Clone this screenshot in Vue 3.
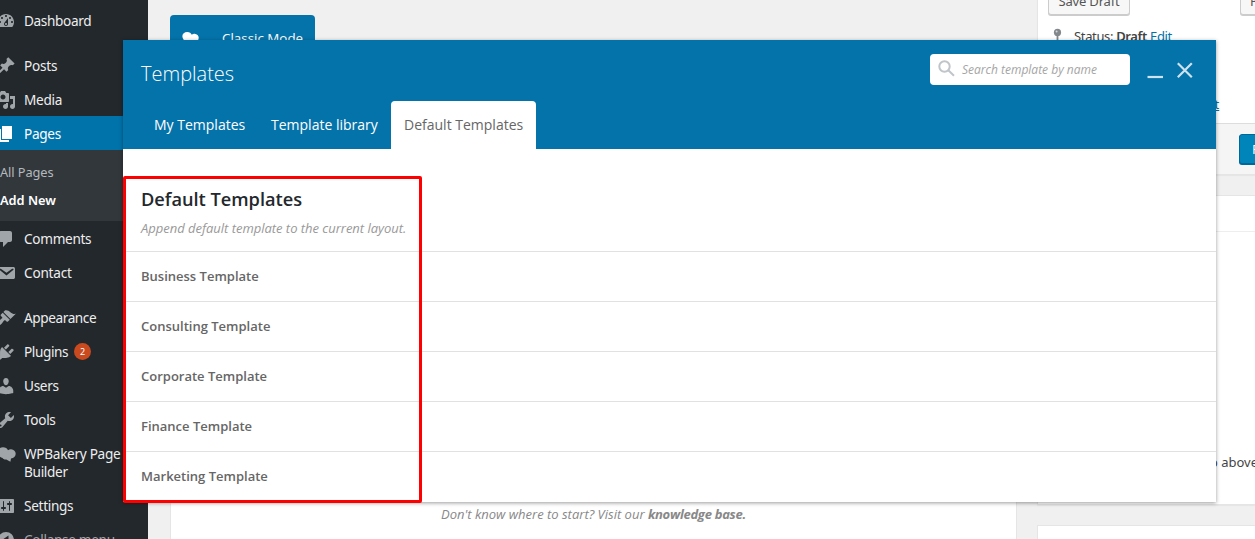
<script setup>
const icons = {
  dashboard: 'M3.76 16h12.48c1.1-1.37 1.76-3.11 1.76-5 0-4.42-3.58-8-8-8s-8 3.58-8 8c0 1.89.66 3.63 1.76 5zM10 4c.55 0 1 .45 1 1s-.45 1-1 1-1-.45-1-1 .45-1 1-1zM6 6c.55 0 1 .45 1 1s-.45 1-1 1-1-.45-1-1 .45-1 1-1zm8 0c.55 0 1 .45 1 1s-.45 1-1 1-1-.45-1-1 .45-1 1-1zm-5.37 5.55L12 7v6c0 1.1-.9 2-2 2s-2-.9-2-2c0-.57.24-1.08.63-1.45zM4 10c.55 0 1 .45 1 1s-.45 1-1 1-1-.45-1-1 .45-1 1-1zm12 0c.55 0 1 .45 1 1s-.45 1-1 1-1-.45-1-1 .45-1 1-1zm-5 3c0-.55-.45-1-1-1s-1 .45-1 1 .45 1 1 1 1-.45 1-1z',
  posts: 'M10.44 3.02l1.82-1.82 6.36 6.35-1.83 1.82c-1.05-.68-2.48-.57-3.41.36l-.75.75c-.92.93-1.04 2.35-.35 3.41l-1.83 1.82-2.41-2.41-2.8 2.79c-.42.42-3.38 2.71-3.8 2.29s1.86-3.39 2.28-3.81l2.79-2.79L4.1 9.36l1.83-1.82c1.05.69 2.48.57 3.4-.36l.75-.75c.93-.92 1.05-2.35.36-3.41z',
  media: 'M13 11V4c0-.55-.45-1-1-1h-1.67L9 1H5L3.67 3H2c-.55 0-1 .45-1 1v7c0 .55.45 1 1 1h10c.55 0 1-.45 1-1zM7 4.5c1.38 0 2.5 1.12 2.5 2.5S8.38 9.5 7 9.5 4.5 8.38 4.5 7 5.62 4.5 7 4.5zM14 6h5v10.5c0 1.38-1.12 2.5-2.5 2.5S14 17.88 14 16.5s1.12-2.5 2.5-2.5c.17 0 .34.02.5.05V9h-3V6zm-4 8.05V13h2v3.5c0 1.38-1.12 2.5-2.5 2.5S7 17.88 7 16.5 8.12 14 9.5 14c.17 0 .34.02.5.05z',
  pages: 'M6 15V2h10v13H6zm-1 1h8v2H3V5h2v11z',
  comments: 'M5 2h9c1.1 0 2 .9 2 2v7c0 1.1-.9 2-2 2h-2l-5 5v-5H5c-1.1 0-2-.9-2-2V4c0-1.1.9-2 2-2z',
  contact: 'M3.87 4h13.25C18.37 4 19 4.59 19 5.79v8.42c0 1.19-.63 1.79-1.88 1.79H3.87c-1.25 0-1.88-.6-1.88-1.79V5.79c0-1.2.63-1.79 1.88-1.79zm6.62 8.6l6.74-5.53c.24-.2.43-.66.13-1.07-.29-.41-.82-.42-1.17-.17l-5.7 3.86L4.8 5.83c-.35-.25-.88-.24-1.17.17-.3.41-.11.87.13 1.07z',
  appearance: 'M14.48 11.06L7.41 3.99l1.5-1.5c.5-.56 2.3-.47 3.51.32 1.21.8 1.43 1.28 2.91 2.1 1.18.64 2.45 1.26 4.45.85zm-.71.71L6.7 4.7 4.93 6.47c-.39.39-.39 1.02 0 1.41l1.06 1.06c.39.39.39 1.03 0 1.42-.6.6-1.43 1.11-2.21 1.69-.35.26-.7.53-1.01.84C1.43 14.23.4 16.08 1.4 17.07c.99 1 2.84-.03 4.18-1.36.31-.31.58-.66.85-1.02.57-.78 1.08-1.61 1.69-2.21.39-.39 1.02-.39 1.41 0l1.06 1.06c.39.39 1.02.39 1.41 0z',
  plugins: 'M13.11 4.36L9.87 7.6 8 5.73l3.24-3.24c.35-.34 1.05-.2 1.56.32.52.51.66 1.21.31 1.55zm-8 1.77l.91-1.12 9.01 9.01-1.19.84c-.71.71-2.63 1.16-3.82 1.16H6.14L4.9 17.26c-.59.59-1.54.59-2.12 0-.59-.58-.59-1.53 0-2.12l1.24-1.24v-3.88c0-1.13.4-3.19 1.09-3.89zm7.26 3.97l3.24-3.24c.34-.35 1.04-.21 1.55.31.52.51.66 1.21.31 1.55l-3.24 3.25z',
  users: 'M10 9.25c-2.27 0-2.73-3.44-2.73-3.44C7 4.02 7.82 2 9.97 2c2.16 0 2.98 2.02 2.71 3.81 0 0-.41 3.44-2.68 3.44zm0 2.57L12.72 10c2.39 0 4.52 2.33 4.52 4.53v2.49s-3.65 1.13-7.24 1.13c-3.65 0-7.24-1.13-7.24-1.13v-2.49c0-2.25 1.94-4.48 4.47-4.48z',
  tools: 'M16.68 9.77c-1.34 1.34-3.3 1.67-4.95.99l-5.41 6.52c-.99.99-2.59.99-3.58 0s-.99-2.59 0-3.57l6.52-5.42c-.68-1.65-.35-3.61.99-4.95 1.28-1.28 3.12-1.62 4.72-1.06l-2.89 2.89 2.82 2.82 2.86-2.87c.53 1.58.18 3.39-1.08 4.65zM3.81 16.21c.4.39 1.04.39 1.43 0 .4-.4.4-1.04 0-1.43-.39-.4-1.03-.4-1.43 0-.39.39-.39 1.03 0 1.43z',
  bakery: 'M1.500 8C1.500 5.200 3.800 3.200 7 3.200c2.400 0 4.300 1.200 5 3.100 1-.8 2-1.100 3.100-1 2.700.2 4.600 2 4.600 4.500 0 2.700-2 4.600-4.700 4.700l-.6 3.300-4.100-2.400c-1.600.3-2.900-.2-3.800-1.400C3.700 13.300 1.500 10.900 1.500 8z',
  settings: 'M18 16V4c0-.55-.45-1-1-1H3c-.55 0-1 .45-1 1v12c0 .55.45 1 1 1h14c.55 0 1-.45 1-1zM8 11h1c.55 0 1 .45 1 1s-.45 1-1 1H8v1.5c0 .28-.22.5-.5.5s-.5-.22-.5-.5V13H6c-.55 0-1-.45-1-1s.45-1 1-1h1V5.500c0-.28.22-.5.5-.5s.5.22.5.5V11zm5-2h-1c-.55 0-1-.45-1-1s.45-1 1-1h1V5.500c0-.28.22-.5.5-.5s.5.22.5.5V7h1c.55 0 1 .45 1 1s-.45 1-1 1h-1v5.500c0 .28-.22.5-.5.5s-.5-.22-.5-.5V9z',
  collapse: 'M10 2a8 8 0 1 1 0 16 8 8 0 0 1 0-16zm2.500 3.500L6 10l6.500 4.500z',
}
const menu = [
  { icon: 'dashboard', label: 'Dashboard' },
  { icon: 'posts', label: 'Posts', gap: true },
  { icon: 'media', label: 'Media' },
  { icon: 'pages', label: 'Pages', active: true, sub: ['All Pages', 'Add New'] },
  { icon: 'comments', label: 'Comments' },
  { icon: 'contact', label: 'Contact' },
  { icon: 'appearance', label: 'Appearance', gap: true },
  { icon: 'plugins', label: 'Plugins', count: 2 },
  { icon: 'users', label: 'Users' },
  { icon: 'tools', label: 'Tools' },
  { icon: 'bakery', label: 'WPBakery Page Builder' },
  { icon: 'settings', label: 'Settings' },
  { icon: 'collapse', label: 'Collapse menu', dim: true },
]
const templates = ['Business', 'Consulting', 'Corporate', 'Finance', 'Marketing']
</script>

<template>
  <div class="screen">
    <nav class="sidebar">
      <template v-for="m in menu" :key="m.icon">
        <div class="item" :class="{ active: m.active, gap: m.gap, dim: m.dim }">
          <svg class="ico" viewBox="0 0 20 20"><path :d="icons[m.icon]" fill-rule="evenodd" /></svg>
          <span class="label" :class="m.icon">{{ m.label }}</span>
          <span v-if="m.count" class="count">{{ m.count }}</span>
        </div>
        <div v-if="m.sub" class="sub">
          <div class="sub-all">{{ m.sub[0] }}</div>
          <div class="sub-new">{{ m.sub[1] }}</div>
        </div>
      </template>
    </nav>

    <main class="editor">
      <div class="classic">
        <svg viewBox="0 0 20 20"><path :d="icons.bakery" /></svg>
        <span>Classic Mode</span>
      </div>
      <div class="canvas">
        <p>Don't know where to start? Visit our <b>knowledge base.</b></p>
      </div>
    </main>

    <aside class="side">
      <section class="box publish">
        <div class="actions"><span class="btn save">Save Draft</span><span class="btn preview">Preview</span></div>
        <div class="status">
          <svg viewBox="0 0 10 16"><circle cx="5" cy="4" r="4" /><path d="M4 7h2v6l-1 2-1-2z" /><circle class="shine" cx="4" cy="3" r="1.100" /></svg>
          <span>Status: <b>Draft</b> <a>Edit</a></span>
        </div>
        <div class="schedule"><a>Edit</a></div>
        <div class="pubfoot"><span class="primary">Publish</span></div>
      </section>
      <section class="box attrs">
        <div class="boxhead"></div>
        <p>Need help? Use the Help tab above</p>
      </section>
      <section class="box last"></section>
    </aside>

    <div class="modal">
      <header>
        <div class="top">
          <h1>Templates</h1>
          <div class="search">
            <svg viewBox="0 0 17 17"><circle cx="6.500" cy="6.500" r="5.200" /><path d="M10.300 10.300l5.700 5.400" /></svg>
            <span>Search template by name</span>
          </div>
          <svg class="win" viewBox="0 0 46 20"><path d="M.5 17h15.500" /><path d="M30.800 3.200l14 14m0-14l-14 14" /></svg>
        </div>
        <div class="tabs">
          <span class="tab my">My Templates</span>
          <span class="tab lib">Template library</span>
          <span class="tab def">Default Templates</span>
        </div>
      </header>
      <div class="intro">
        <h2>Default Templates</h2>
        <p>Append default template to the current layout.</p>
      </div>
      <div v-for="t in templates" :key="t" class="row"><span>{{ t }} Template</span></div>
      <div class="highlight"></div>
    </div>
  </div>
</template>

<style>
body { overflow: hidden; }
</style>

<style scoped>
* { box-sizing: border-box; }
h1, h2, p { margin: 0; font-weight: 400; }
.screen { position: relative; display: flex; width: 1255px; height: 539px; overflow: hidden; background: #f0f0f0; font-family: "Open Sans", "Noto Sans", sans-serif; font-size: 13px; color: #444; white-space: nowrap; }
.sidebar { width: 148px; flex: none; padding-top: 4px; background: #23282d; font-family: "Noto Sans", sans-serif; }
.item { display: flex; align-items: flex-start; min-height: 34px; padding: 8px 0; color: #eee; font-size: 14px; line-height: 18px; }
.item.gap { margin-top: 11px; }
.item.active { margin-top: -1px; background: #0073aa; color: #fff; padding: 9px 0 7px; }
.ico { width: 20px; height: 20px; flex: none; margin: -1px 8px -1px -4px; fill: #a0a5aa; }
.active .ico { fill: #fff; }
.item.dim { color: #a0a5aa; }
.dim .ico { fill: #a0a5aa; }
.label { font-size: 13.600px; letter-spacing: -0.3px; }
.label.dashboard { letter-spacing: -0.35px; }
.label.appearance { letter-spacing: -0.4px; }
.label.plugins { letter-spacing: -0.4px; }
.label.posts, .label.contact { letter-spacing: -0.2px; }
.label.bakery { width: 99px; white-space: normal; }
.count { width: 17px; height: 17px; margin: 0 0 0 6px; border-radius: 9px; background: #ca4a1f; color: #fff; font-size: 9px; line-height: 17px; text-align: center; }
.sub { height: 71px; margin-bottom: 1px; padding-top: 8px; background: #32373c; font-size: 12.800px; letter-spacing: -0.08px; line-height: 28px; color: #b4b9be; }
.sub-new { color: #fff; font-weight: 600; letter-spacing: 0; }

.editor { width: 847px; margin-left: 22px; flex: none; padding-top: 15px; }
.classic { display: flex; align-items: center; width: 145px; height: 46px; padding-left: 11px; border-radius: 4px; background: #0473aa; color: #fff; font-size: 13.400px; }
.classic svg { width: 18px; height: 18px; margin-right: 23px; fill: #fff; }
.canvas { height: 479px; margin-top: 20px; padding: 423px 0 0 270px; border: 1px solid #e5e5e5; background: #fff; }
.canvas p { color: #888; font-style: italic; line-height: 18px; }
.canvas b { font-weight: 700; letter-spacing: -0.28px; }

.side { width: 280px; margin-left: 20px; flex: none; font-family: "Noto Sans", sans-serif; }
.box { border: 1px solid #e5e5e5; background: #fff; }
.publish { height: 175px; border-top: 0; box-shadow: 0 1px 1px rgba(0,0,0,.04); }
.actions { display: flex; height: 15px; align-items: flex-end; padding-left: 10px; }
.btn { height: 28px; flex: none; border: 1px solid #ccc; border-radius: 3px; background: #f7f7f7; box-shadow: 0 1px 0 #ccc; line-height: 26px; text-align: center; color: #555; letter-spacing: -0.2px; }
.save { width: 82px; }
.preview { width: 66px; margin-left: 110px; }
.status { display: flex; margin-top: 12px; padding-left: 15px; line-height: 18px; letter-spacing: -0.35px; }
.status svg { width: 9px; height: 16px; margin: 1px 12px 0 0; fill: #82878c; }
.status .shine { fill: #d5d7d9; }
.status b { font-weight: 600; }
a { color: #0073aa; }
.schedule { margin-top: 50px; padding-left: 158px; line-height: 18px; }
.schedule a { text-decoration: underline; }
.pubfoot { height: 51px; margin-top: 10px; padding: 10px 0 0 201px; border-top: 1px solid #ddd; background: #f5f5f5; }
.primary { display: block; width: 66px; height: 30px; border: 1px solid #006799; border-radius: 3px; background: #0085ba; box-shadow: 0 1px 0 #006799; color: #fff; line-height: 28px; padding-left: 12px; }
.attrs { height: 310px; margin-top: 20px; box-shadow: 0 1px 1px rgba(0,0,0,.04); }
.boxhead { height: 36px; border-bottom: 1px solid #eee; }
.attrs p { width: 220px; margin-top: 221px; text-align: right; line-height: 18px; }
.last { height: 60px; margin-top: 20px; }

.modal { position: absolute; left: 123px; top: 40px; width: 1093px; height: 462px; background: #fff; box-shadow: 0 1px 4px rgba(0,0,0,.4); }
header { height: 109px; background: #0473aa; color: #fff; }
.top { display: flex; height: 61px; align-items: flex-start; padding-left: 18px; }
h1 { width: 789px; padding-top: 20px; font-size: 20px; line-height: 28px; font-weight: 300; }
.search { display: flex; width: 200px; height: 31px; margin-top: 14px; padding-left: 8px; align-items: center; border-radius: 4px; background: #fff; color: #a5a5a5; font-size: 12px; font-style: italic; }
.search svg { width: 17px; height: 17px; margin: -3px 7px 0 0; fill: none; stroke: #c0c5ca; stroke-width: 2; }
.win { width: 46px; height: 20px; margin: 20px 0 0 17px; fill: none; stroke: #cde3ee; stroke-width: 2.200; }
.tabs { display: flex; height: 48px; padding-left: 18px; font-size: 14px; line-height: 48px; }
.tab { padding-left: 13px; border-radius: 4px 4px 0 0; }
.my { width: 117px; }
.lib { width: 133px; }
.def { width: 145px; background: #fff; color: #666; }
.intro { height: 102px; padding: 36px 0 0 18px; }
h2 { color: #23282d; font-size: 18.200px; line-height: 28px; font-weight: 600; }
.intro p { margin-top: 6px; color: #999; font-style: italic; line-height: 18px; letter-spacing: -0.02px; }
.row { height: 50px; padding-left: 18px; border-top: 1px solid #e1e1e1; color: #666; font-weight: 600; line-height: 48px; }
.highlight { position: absolute; left: 0; top: 136px; width: 299px; height: 327px; border: 3px solid #f00; border-radius: 2px; }
</style>
